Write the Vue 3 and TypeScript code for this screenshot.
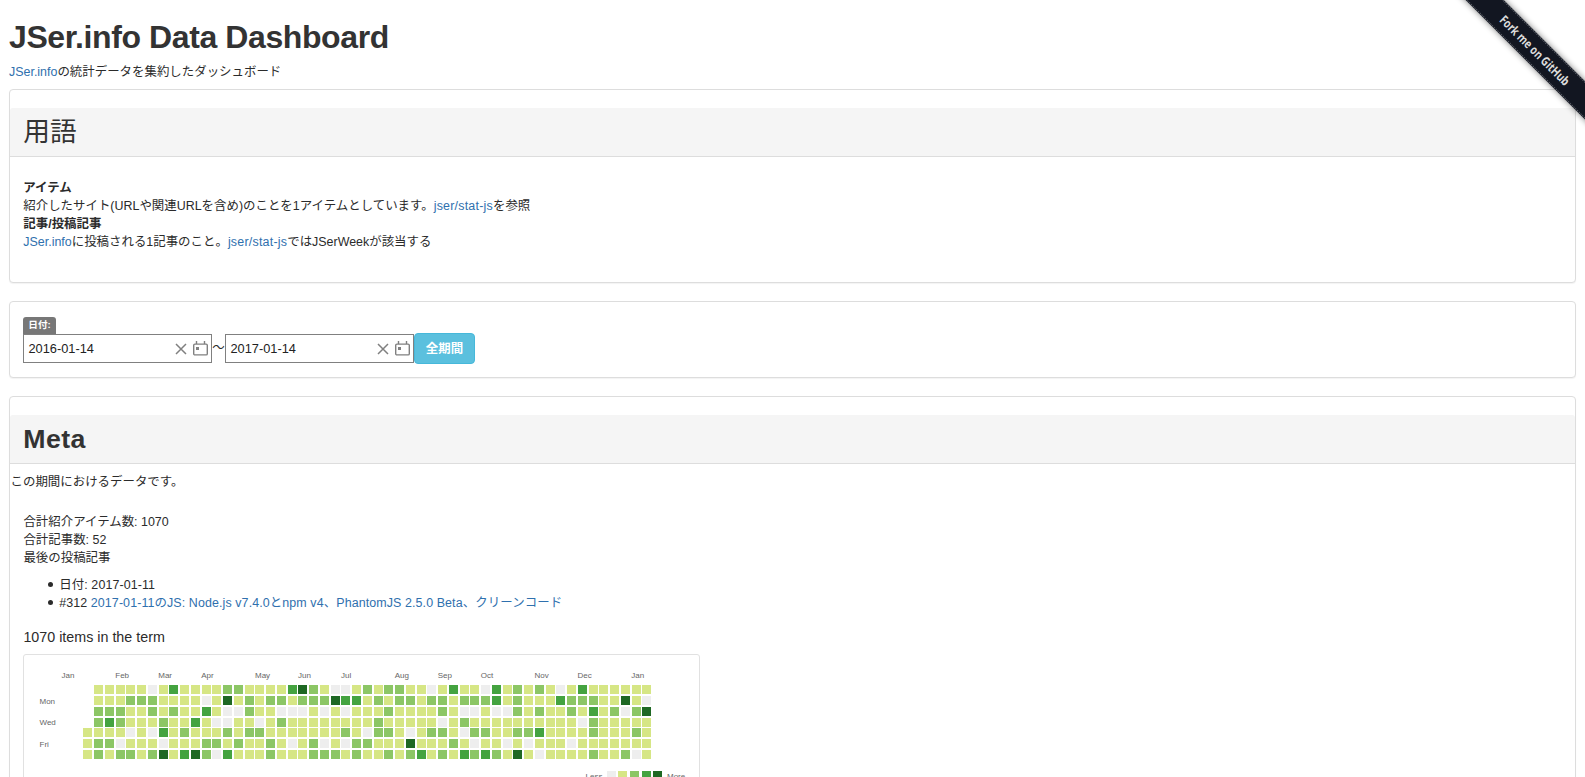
<script setup lang="ts">
interface MonthLabel {
  name: string
  column: number
}

const pitch = 10.75
const originX = 59
const originY = 30

// One string per weekday, Sunday first; "." is a day outside the term.
const levels: string[] = [
  '.1111101311112211113421001212211013110312121013111111',
  '.1112221111014121221222433121221221222312111322211410',
  '.2221121211310021100010101112111121001002121121312024',
  '.2321112113100110121111111121111101211111111110211111',
  '11110103121112122111111121022101221022112231111211121',
  '12201110111221211210120102211141112101101011101111111',
  '12122124134203111211122212112123121323214101111211201',
]

const colors: string[] = ['#eeeeee', '#d6e685', '#8cc665', '#44a340', '#1e6823']

const cells = levels.flatMap((row, r) =>
  row.split('').flatMap((level, c) =>
    level === '.'
      ? []
      : [{ key: `${r}-${c}`, x: originX + Math.ceil(c * pitch), y: originY + Math.ceil(r * pitch), fill: colors[Number(level)] }],
  ),
)

const months: MonthLabel[] = [
  { name: 'Jan', column: -2 },
  { name: 'Feb', column: 3 },
  { name: 'Mar', column: 7 },
  { name: 'Apr', column: 11 },
  { name: 'May', column: 16 },
  { name: 'Jun', column: 20 },
  { name: 'Jul', column: 24 },
  { name: 'Aug', column: 29 },
  { name: 'Sep', column: 33 },
  { name: 'Oct', column: 37 },
  { name: 'Nov', column: 42 },
  { name: 'Dec', column: 46 },
  { name: 'Jan', column: 51 },
]

const weekdays = [
  { name: 'Mon', y: 49 },
  { name: 'Wed', y: 70 },
  { name: 'Fri', y: 92 },
]

const legendX = [583, 594, 606, 618, 629]
const dates: string[] = ['2016-01-14', '2017-01-14']
</script>

<template>
  <div class="page">
    <svg class="ribbon" width="133" height="133" viewBox="0 0 133 133">
      <g transform="translate(82.3 50.2) rotate(45) translate(0 -0.4)">
        <rect class="ribbon-shadow" x="-130" y="-13.5" width="240" height="27" />
        <rect class="ribbon-band" x="-130" y="-13.5" width="240" height="27" />
        <path class="ribbon-edge" d="M-130 -12.6H110M-130 12.6H110" />
        <text class="ribbon-text" x="0.5" y="4.7" text-anchor="middle" textLength="93" lengthAdjust="spacingAndGlyphs">Fork me on GitHub</text>
      </g>
    </svg>

    <h1 class="title">JSer.info Data Dashboard</h1>
    <p class="lead"><a>JSer.info</a>の統計データを集約したダッシュボード</p>

    <section class="panel terms">
      <h2 class="heading">用語</h2>
      <dl class="defs">
        <dt>アイテム</dt>
        <dd>紹介したサイト(URLや関連URLを含め)のことを1アイテムとしています。<a class="repo">jser/stat-js</a>を参照</dd>
        <dt>記事/投稿記事</dt>
        <dd><a>JSer.info</a>に投稿される1記事のこと。<a class="repo">jser/stat-js</a>ではJSerWeekが該当する</dd>
      </dl>
    </section>

    <section class="panel range">
      <span class="tag">日付:</span>
      <div class="range-row">
        <template v-for="(date, i) in dates" :key="date">
          <span v-if="i" class="tilde">〜</span>
          <div class="date">
            <span class="date-text">{{ date }}</span>
            <svg class="clear" width="12" height="12" viewBox="0 0 12 12"><path d="M1 1L11 11M11 1L1 11" /></svg>
            <svg class="cal" width="15" height="15" viewBox="0 0 15 15">
              <rect x="0.7" y="3.1" width="13.6" height="10.8" rx="1.2" />
              <path d="M3.5 0V3M11.5 0V3" />
              <rect class="dot" x="3" y="6" width="3" height="3" />
            </svg>
          </div>
        </template>
        <button class="all" type="button">全期間</button>
      </div>
    </section>

    <section class="panel meta">
      <h2 class="heading latin">Meta</h2>
      <p class="note">この期間におけるデータです。</p>
      <div class="body">
        <div class="line">合計紹介アイテム数: 1070</div>
        <div class="line">合計記事数: 52</div>
        <div class="line">最後の投稿記事</div>
        <ul class="posts">
          <li>日付: 2017-01-11</li>
          <li>#312 <a>2017-01-11のJS: Node.js v7.4.0とnpm v4、PhantomJS 2.5.0 Beta、クリーンコード</a></li>
        </ul>
        <h3 class="count">1070 items in the term</h3>
        <div class="chart">
          <svg width="675" height="140" viewBox="0 0 675 140">
            <text v-for="m in months" :key="m.column" :x="originX + m.column * pitch" y="23">{{ m.name }}</text>
            <text v-for="d in weekdays" :key="d.name" x="15.5" :y="d.y">{{ d.name }}</text>
            <rect v-for="c in cells" :key="c.key" :x="c.x" :y="c.y" width="9" height="9" :fill="c.fill" />
            <text x="561.5" y="123.5">Less</text>
            <rect v-for="(x, i) in legendX" :key="x" :x="x" y="116" width="9" height="9" :fill="colors[i]" />
            <text x="643" y="123.5">More</text>
          </svg>
        </div>
      </div>
    </section>
  </div>
</template>

<style>
html,
body {
  background: #fff;
  overflow: hidden;
}
</style>

<style scoped>
.page {
  position: relative;
  box-sizing: border-box;
  width: 1585px;
  height: 777px;
  overflow: hidden;
  padding: 18px 9px 0;
  font-family: 'Liberation Sans', 'Noto Sans CJK JP', sans-serif;
  font-size: 12.45px;
  line-height: 18px;
  color: #2b2b2b;
}
a {
  color: #2f70ae;
}
.repo {
  letter-spacing: 0.22px;
}
.ribbon {
  position: absolute;
  top: 0;
  right: 0;
  z-index: 2;
}
.ribbon-band {
  fill: #121621;
}
.ribbon-shadow {
  fill: #000;
  opacity: 0.5;
  filter: blur(3px);
}
.ribbon-edge {
  stroke: #5b5f68;
  stroke-width: 1;
  stroke-dasharray: 1.5 1;
}
.ribbon-text {
  font: 700 12.5px 'Open Sans', sans-serif;
  fill: #dcdcdc;
}
.title {
  margin: 0;
  height: 35px;
  font-size: 32px;
  line-height: 38px;
  font-weight: 700;
  letter-spacing: -0.4px;
  color: #333;
}
.lead {
  margin: 10px 0 8px;
  height: 18px;
}
.panel {
  box-sizing: border-box;
  margin-bottom: 18px;
  border: 1px solid #ddd;
  border-radius: 4px;
  box-shadow: 0 1px 1px rgba(0, 0, 0, 0.05);
  background: #fff;
}
.heading {
  box-sizing: border-box;
  height: 49px;
  margin: 18px 0 0;
  padding: 9px 13.3px;
  background: #f5f5f5;
  border-bottom: 1px solid #ddd;
  border-radius: 3px 3px 0 0;
  font-size: 26.7px;
  line-height: 30px;
  font-weight: 400;
  color: #333;
}
.heading.latin {
  font-weight: 700;
  letter-spacing: 0.4px;
}
.terms {
  height: 194px;
}
.defs {
  margin: 0;
  padding: 22px 13.3px 0;
}
dt {
  font-weight: 700;
}
dd {
  margin: 0;
}
.range {
  height: 77px;
  padding: 15px 13px;
}
.tag {
  display: block;
  width: 33px;
  height: 17px;
  border-radius: 3px 3px 0 0;
  background: #777;
  color: #fff;
  font-size: 9.6px;
  line-height: 16px;
  font-weight: 700;
  text-align: center;
}
.range-row {
  display: flex;
  height: 29px;
  align-items: center;
}
.date {
  box-sizing: border-box;
  display: flex;
  align-items: center;
  width: 189px;
  height: 29px;
  padding: 0 3px 0 4.5px;
  border: 1px solid #808080;
}
.date-text {
  flex: 1;
  font-size: 12.8px;
  color: #222;
}
.clear {
  margin: 1px 6.5px 0 0;
  stroke: #808080;
  stroke-width: 1.5;
}
.cal {
  fill: none;
  stroke: #808080;
  stroke-width: 1.4;
}
.cal .dot {
  fill: #808080;
  stroke: none;
}
.tilde {
  width: 13px;
  text-align: center;
  line-height: 16px;
  padding-bottom: 2px;
}
.all {
  flex: none;
  width: 61px;
  height: 31px;
  padding: 0;
  border: 1px solid #46b8da;
  border-radius: 4px;
  background: #5bc0de;
  color: #fff;
  font: inherit;
  font-weight: 700;
}
.meta {
  height: 500px;
}
.note {
  margin: 9px 0 0;
  padding-left: 0.5px;
}
.body {
  padding: 22px 13px 0;
}
.line,
.count {
  padding-left: 0.4px;
}
.posts {
  margin: 9px 0;
  padding-left: 36.2px;
  list-style: none;
  letter-spacing: 0.1px;
}
.posts li::before {
  content: '';
  display: inline-block;
  width: 5px;
  height: 5px;
  margin: 0 6px 2px -11px;
  border-radius: 50%;
  background: #2b2b2b;
}
.count {
  margin: 17px 0 8px;
  font-size: 14.3px;
  line-height: 17px;
  font-weight: 400;
}
.chart {
  box-sizing: border-box;
  width: 677px;
  border: 1px solid #e1e1e1;
  border-radius: 3px;
}
.chart svg {
  display: block;
}
.chart text {
  font-size: 8px;
  fill: #666;
}
</style>
